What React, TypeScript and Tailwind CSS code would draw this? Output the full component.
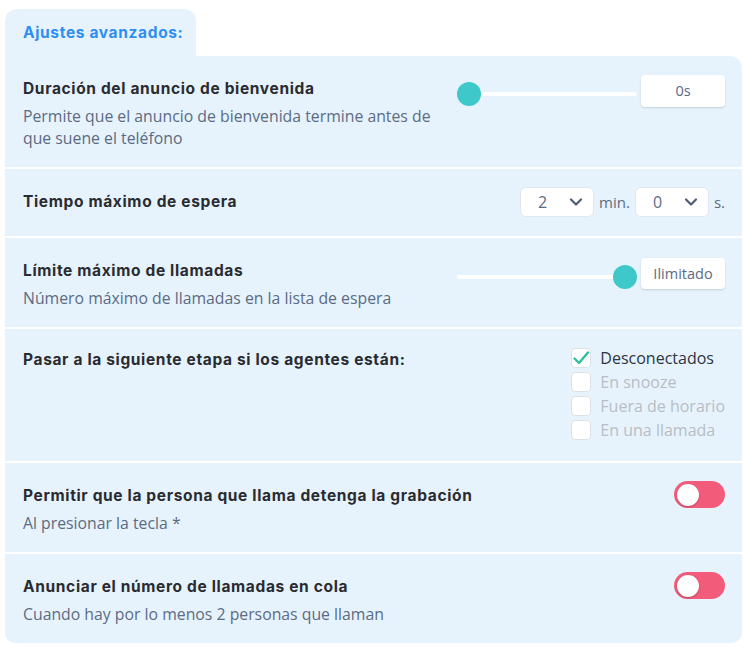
import { ChevronDown } from 'lucide-react'

const TITLE = "font-['Inter','Liberation_Sans',sans-serif] text-[15.5px] font-bold leading-[18px] tracking-[0.65px] text-[#2a2b30]"
const DESC = "mt-[7px] text-[15.8px] leading-[22px] text-[#5c6b84]"

function Slider({ value }: { value: 'min' | 'max' }) {
  return (
    <div className="relative mt-[7px] h-6 w-[180px]">
      <div className="absolute left-0 right-0 top-[10px] h-[4px] rounded-full bg-white" />
      <div
        className={`absolute top-0 h-6 w-6 rounded-full bg-[#3ec8c9] ${value === 'min' ? 'left-0' : 'right-0'}`}
      />
    </div>
  )
}

function Select({ value }: { value: string }) {
  return (
    <div className="flex h-[30px] w-[74px] items-center justify-between rounded-md border border-[#e1e7ee] bg-white pl-[17px] pr-[7px] text-[16px] text-[#5c6b84]">
      <span>{value}</span>
      <ChevronDown size={20} strokeWidth={2.6} className="text-[#4d5c78]" />
    </div>
  )
}

function Toggle() {
  return (
    <div className="-mt-[6px] flex h-[27px] w-[51px] items-center rounded-full bg-[#f35b7b] pl-[3px]">
      <div className="h-[22px] w-[22px] rounded-full bg-white shadow-[0_1px_2px_rgba(0,0,0,0.25)]" />
    </div>
  )
}

const CHECKS = [
  { label: 'Desconectados', checked: true },
  { label: 'En snooze', checked: false },
  { label: 'Fuera de horario', checked: false },
  { label: 'En una llamada', checked: false },
]

export default function App() {
  return (
    <div className="w-[746px] bg-white pl-[5px] pr-[4px] pt-[9px] font-['Open_Sans','Noto_Sans',sans-serif]">
      {/* Tab */}
      <div className="flex h-[47px] w-[191px] items-center rounded-t-xl bg-[#e6f3fd] pl-[18px]">
        <span className="font-['Inter','Liberation_Sans',sans-serif] text-[15.5px] font-bold tracking-[0.65px] text-[#2f8ff0]">
          Ajustes avanzados:
        </span>
      </div>

      {/* Panel */}
      <div className="flex flex-col divide-y-2 divide-white overflow-hidden rounded-b-[10px] rounded-tr-xl bg-[#e6f3fd]">
        <div className="flex justify-between pb-[18px] pl-[18px] pr-[17px] pt-6">
          <div className="max-w-[425px]">
            <p className={TITLE}>Duración del anuncio de bienvenida</p>
            <p className={DESC}>Permite que el anuncio de bienvenida termine antes de que suene el teléfono</p>
          </div>
          <div className="-mt-[5px] flex items-start gap-[4px]">
            <Slider value="min" />
            <div className="flex h-8 w-[84px] items-center justify-center rounded-[4px] bg-white text-[14.5px] text-[#5c6b84] shadow-[0_1px_2px_rgba(0,0,0,0.15)]">
              0s
            </div>
          </div>
        </div>

        <div className="flex items-center justify-between pb-[19px] pl-[18px] pr-[17px] pt-[18px]">
          <p className={TITLE}>Tiempo máximo de espera</p>
          <div className="flex items-center text-[15px] text-[#5c6b84]">
            <Select value="2" />
            <span className="ml-[5px] mr-[5px]">min.</span>
            <Select value="0" />
            <span className="ml-[5px]">s.</span>
          </div>
        </div>

        <div className="flex justify-between pb-[18px] pl-[18px] pr-[17px] pt-6">
          <div>
            <p className={TITLE}>Límite máximo de llamadas</p>
            <p className={DESC}>Número máximo de llamadas en la lista de espera</p>
          </div>
          <div className="-mt-[4px] flex items-start gap-[4px]">
            <Slider value="max" />
            <div className="flex h-[31px] w-[84px] items-center justify-center rounded-[4px] bg-white text-[14.5px] text-[#5c6b84] shadow-[0_1px_2px_rgba(0,0,0,0.15)]">
              Ilimitado
            </div>
          </div>
        </div>

        <div className="flex justify-between pb-[19px] pl-[18px] pr-[17px] pt-[17px]">
          <p className={`${TITLE} mt-[5px]`}>Pasar a la siguiente etapa si los agentes están:</p>
          <div className="flex flex-col">
            {CHECKS.map(c => (
              <div key={c.label} className="flex h-6 items-center gap-[9px]">
                <div className="flex h-5 w-5 items-center justify-center rounded-[4px] border border-[#dde2e8] bg-white">
                  {c.checked && (
                    <svg width="18" height="18" viewBox="0 0 18 18" fill="none">
                      <path d="M2.5 9.5 L7 14 L16 3.5" stroke="#2fbf9f" strokeWidth="2.4" strokeLinecap="round" strokeLinejoin="round" />
                    </svg>
                  )}
                </div>
                <span className={`text-[16px] leading-6 ${c.checked ? 'text-[#2d3444]' : 'text-[#b9bdc3]'}`}>{c.label}</span>
              </div>
            ))}
          </div>
        </div>

        <div className="flex justify-between pb-[18px] pl-[18px] pr-[17px] pt-6">
          <div>
            <p className={TITLE}>Permitir que la persona que llama detenga la grabación</p>
            <p className={DESC}>Al presionar la tecla *</p>
          </div>
          <Toggle />
        </div>

        <div className="flex justify-between pb-[18px] pl-[18px] pr-[17px] pt-6">
          <div>
            <p className={TITLE}>Anunciar el número de llamadas en cola</p>
            <p className={DESC}>Cuando hay por lo menos 2 personas que llaman</p>
          </div>
          <Toggle />
        </div>
      </div>
    </div>
  )
}
